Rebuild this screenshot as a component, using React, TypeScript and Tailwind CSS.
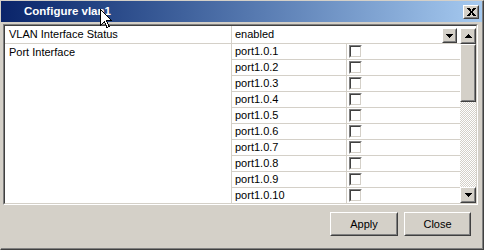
import React from "react";

const ports = Array.from({ length: 10 }, (_, i) => `port1.0.${i + 1}`);

function Raised({ className = "", children }: { className?: string; children?: React.ReactNode }) {
  return (
    <div className={`border border-t-white border-l-white border-r-[#404040] border-b-[#404040] bg-[#d4d0c8] ${className}`}>
      <div className="w-full h-full border border-t-[#d4d0c8] border-l-[#d4d0c8] border-r-[#808080] border-b-[#808080] flex items-center justify-center">
        {children}
      </div>
    </div>
  );
}

function DownTri() {
  return (
    <svg width="7" height="4" viewBox="0 0 7 4">
      <path d="M0 0h7L3.5 4z" fill="#000" shapeRendering="crispEdges" />
    </svg>
  );
}
function UpTri() {
  return (
    <svg width="7" height="4" viewBox="0 0 7 4">
      <path d="M0 4h7L3.5 0z" fill="#000" shapeRendering="crispEdges" />
    </svg>
  );
}

function Checkbox() {
  return (
    <div className="w-[13px] h-[13px] border border-t-[#808080] border-l-[#808080] border-r-white border-b-white">
      <div className="w-full h-full border border-t-[#404040] border-l-[#404040] border-r-[#d4d0c8] border-b-[#d4d0c8] bg-white" />
    </div>
  );
}

export default function App() {
  return (
    <div
      className="relative w-[484px] h-[250px] bg-[#d4d0c8] border border-t-[#d4d0c8] border-l-[#d4d0c8] border-r-[#404040] border-b-[#404040] text-black overflow-hidden"
      style={{ fontFamily: '"Liberation Sans", Arial, sans-serif' }}
    >
      <div className="w-full h-full flex flex-col border-r border-b border-r-[#808080] border-b-[#808080]">
        {/* Title bar */}
        <div className="h-[21px] flex items-start bg-gradient-to-r from-[#0a246a] to-[#a6caf0]">
          <div className="ml-[23px] mt-[4px] text-white font-bold text-[11.5px] leading-[13px]">Configure vlan1</div>
          <div className="flex-1" />
          <Raised className="w-[16px] h-[14px] mt-[4px] mr-[3px]">
            <svg width="9" height="8" viewBox="0 0 9 8" shapeRendering="crispEdges">
              <path d="M0 0h2.5L4.5 2.6 6.5 0H9L5.8 4 9 8H6.5L4.5 5.4 2.5 8H0L3.2 4z" fill="#000" />
            </svg>
          </Raised>
        </div>

        {/* Table */}
        <div className="mt-[2px] ml-[2px] w-[475px] h-[181px] border border-t-[#808080] border-l-[#808080] border-r-white border-b-white">
          <div className="w-full h-full border border-t-[#404040] border-l-[#404040] border-r-[#d4d0c8] border-b-[#d4d0c8] bg-white flex overflow-hidden">
            <div className="w-[455px] flex flex-col text-[11px]">
              {/* first row */}
              <div className="h-[18px] flex border-b border-[#d4d0c8] shrink-0">
                <div className="w-[227px] border-r border-[#d4d0c8] pl-[4px] flex items-center">VLAN Interface Status</div>
                <div className="flex-1 flex items-center pl-[3px] relative">
                  <span>enabled</span>
                  <Raised className="absolute right-[3px] top-[2px] w-[15px] h-[15px]">
                    <DownTri />
                  </Raised>
                </div>
              </div>
              {/* port rows */}
              <div className="flex flex-1 min-h-0">
                <div className="w-[227px] border-r border-[#d4d0c8] pl-[4px] pt-[1px] leading-[15px]">Port Interface</div>
                <div className="flex-1 flex flex-col">
                  {ports.map((p) => (
                    <div key={p} className="h-[16px] shrink-0 flex border-b border-[#d4d0c8]">
                      <div className="w-[115px] border-r border-[#d4d0c8] pl-[3px] flex items-center">{p}</div>
                      <div className="flex-1 pl-[2px] pt-[1px]">
                        <Checkbox />
                      </div>
                    </div>
                  ))}
                </div>
              </div>
            </div>
            {/* Scrollbar */}
            <div className="w-[16px] mt-[2px] flex flex-col">
              <Raised className="w-[16px] h-[16px] shrink-0">
                <UpTri />
              </Raised>
              <Raised className="w-[16px] h-[58px] shrink-0" />
              <div className="flex-1 bg-[image:repeating-conic-gradient(#d4d0c8_0_25%,#ffffff_0_50%)] bg-[length:2px_2px]" />
              <Raised className="w-[16px] h-[16px] shrink-0">
                <DownTri />
              </Raised>
            </div>
          </div>
        </div>

        {/* Buttons */}
        <div className="flex justify-end gap-[6px] mt-[7px] pr-[11px]">
          <Raised className="w-[68px] h-[24px]">
            <span className="text-[11px]">Apply</span>
          </Raised>
          <Raised className="w-[67px] h-[24px]">
            <span className="text-[11px]">Close</span>
          </Raised>
        </div>
      </div>

      {/* Mouse cursor */}
      <svg className="absolute left-[99px] top-[8px]" width="12" height="20" viewBox="0 0 12 20" shapeRendering="crispEdges">
        <path d="M0.5 0.5 V16.5 L4.5 12.5 L7 18.5 L9 17.5 L6.5 11.5 H11.5 Z" fill="#fff" stroke="#000" strokeWidth="1" />
      </svg>
    </div>
  );
}
